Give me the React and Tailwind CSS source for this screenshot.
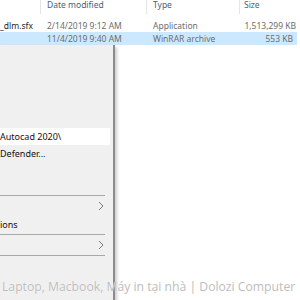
import React from 'react';

const cell = "font-['Noto_Sans',sans-serif] text-[8.5px] leading-[10px] whitespace-nowrap";

const FileRow = ({ name, date, type, size, selected }) => (
  <div className={`flex h-[13px] items-center ${selected ? 'bg-[#cce8ff] w-[297px]' : ''}`}>
    <div className={`w-[41px] text-[#1f1f1f] ${cell}`}>{name}</div>
    <div className={`w-[106px] pl-[6px] text-[#6d6d6d] ${cell}`}>{date}</div>
    <div className={`w-[93px] pl-[6px] text-[#6d6d6d] ${cell}`}>{type}</div>
    <div className={`flex-1 pr-[4px] text-right text-[#6d6d6d] ${cell}`}>{size}</div>
  </div>
);

const Chevron = () => (
  <svg width="6" height="10" viewBox="0 0 6 10" className="mr-[6px]">
    <path d="M1 1 L5 5 L1 9" fill="none" stroke="#7a7a7a" strokeWidth="1" />
  </svg>
);

const MenuItem = ({ label, active, chevron, h = 17 }) => (
  <div
    className={`flex items-center justify-between w-[110px] ${active ? 'bg-white' : ''}`}
    style={{ height: h }}
  >
    <span className={`text-[#111] ${cell} text-[9px]`}>{label}</span>
    {chevron && <Chevron />}
  </div>
);

const Sep = () => <div className="h-px w-[105px] bg-[#a8a8a8]" />;

export default function App() {
  return (
    <div className="relative w-[300px] h-[300px] overflow-hidden bg-white">
      {/* header */}
      <div className="flex h-[14px]">
        <div className="w-[41px] border-r border-[#e5e5e5]" />
        <div className={`w-[106px] pl-[6px] border-r border-[#e5e5e5] text-[#4c607a] ${cell}`}>Date modified</div>
        <div className={`w-[93px] pl-[6px] border-r border-[#e5e5e5] text-[#4c607a] ${cell}`}>Type</div>
        <div className={`flex-1 pl-[4px] text-[#4c607a] ${cell}`}>Size</div>
      </div>
      <div className="h-[5px]" />
      <FileRow name="_dlm.sfx" date="2/14/2019 9:12 AM" type="Application" size="1,513,299 KB" />
      <FileRow name="" date="11/4/2019 9:40 AM" type="WinRAR archive" size="553 KB" selected />

      {/* context menu */}
      <div className="absolute left-0 top-[45px] w-[115px] h-[255px] bg-[#f0f0f0] border-r-2 border-[#8c8c8c] shadow-[2px_2px_3px_rgba(0,0,0,0.2)]">
        <div className="h-[83px]" />
        <MenuItem label="Autocad 2020\" active />
        <MenuItem label="Defender..." />
        <div className="h-[33px]" />
        <Sep />
        <MenuItem label="" chevron h={20} />
        <MenuItem label="ions" h={18} />
        <Sep />
        <MenuItem label="" chevron h={20} />
        <Sep />
      </div>

      {/* watermark */}
      <div className="absolute left-[2px] top-[280px] font-['Open_Sans',sans-serif] text-[12.2px] leading-[14px] whitespace-nowrap text-[#bdbdbd] [text-shadow:0_0_1px_#fff]">
        Laptop, Macbook, Máy in tại nhà | Dolozi Computer
      </div>
    </div>
  );
}
